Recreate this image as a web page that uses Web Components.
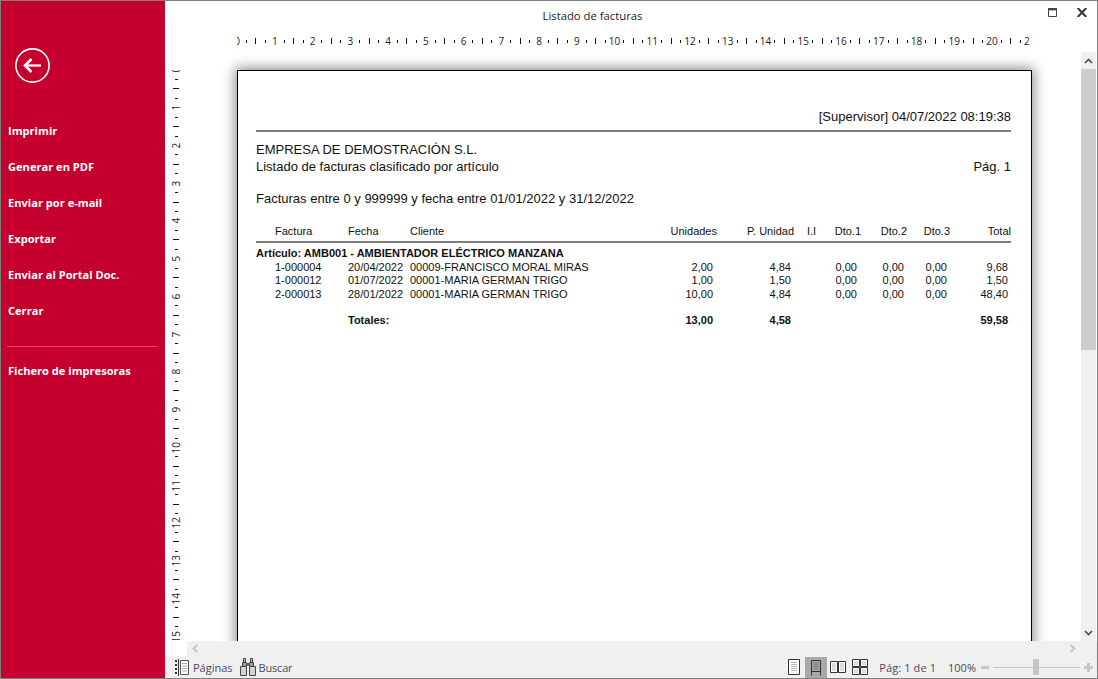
<!DOCTYPE html>
<html lang="es">
<head>
<meta charset="utf-8">
<title>Listado de facturas</title>
<style>
  html, body { margin: 0; padding: 0; background: #fff; overflow: hidden; }
  body { font-family: "Open Sans", "Liberation Sans", sans-serif; }
</style>
</head>
<body>

<app-window>
  <side-menu slot="menu">
    <menu-item>Imprimir</menu-item>
    <menu-item>Generar en PDF</menu-item>
    <menu-item>Enviar por e-mail</menu-item>
    <menu-item>Exportar</menu-item>
    <menu-item>Enviar al Portal Doc.</menu-item>
    <menu-item>Cerrar</menu-item>
    <menu-item slot="extra">Fichero de impresoras</menu-item>
  </side-menu>

  <title-bar slot="title">Listado de facturas</title-bar>
  <cm-ruler slot="hruler" count="22"></cm-ruler>
  <cm-ruler slot="vruler" vertical count="16"></cm-ruler>

  <report-page slot="page">
    <report-line align="right" top="38">[Supervisor] 04/07/2022 08:19:38</report-line>
    <report-rule top="5"></report-rule>
    <report-line top="10">EMPRESA DE DEMOSTRACIÓN S.L.</report-line>
    <report-line top="1" split>
      <span>Listado de facturas clasificado por artículo</span>
      <span>Pág. 1</span>
    </report-line>
    <report-line top="16">Facturas entre 0 y 999999 y fecha entre 01/01/2022 y 31/12/2022</report-line>

    <report-row top="18">
      <span class="c2">Factura</span><span class="c3">Fecha</span><span class="c4">Cliente</span>
      <span class="c5">Unidades</span><span class="c6">P. Unidad</span><span class="c7">I.I</span>
      <span class="c8">Dto.1</span><span class="c9">Dto.2</span><span class="c10">Dto.3</span><span class="c11">Total</span>
    </report-row>
    <report-rule top="3"></report-rule>

    <report-row top="4" bold><span class="all">Artículo: AMB001 - AMBIENTADOR ELÉCTRICO MANZANA</span></report-row>
    <report-row top="1" values>
      <span class="c2">1-000004</span><span class="c3">20/04/2022</span><span class="c4">00009-FRANCISCO MORAL MIRAS</span>
      <span class="c5">2,00</span><span class="c6">4,84</span>
      <span class="c8">0,00</span><span class="c9">0,00</span><span class="c10">0,00</span><span class="c11">9,68</span>
    </report-row>
    <report-row top="0" values>
      <span class="c2">1-000012</span><span class="c3">01/07/2022</span><span class="c4">00001-MARIA GERMAN TRIGO</span>
      <span class="c5">1,00</span><span class="c6">1,50</span>
      <span class="c8">0,00</span><span class="c9">0,00</span><span class="c10">0,00</span><span class="c11">1,50</span>
    </report-row>
    <report-row top="1" values>
      <span class="c2">2-000013</span><span class="c3">28/01/2022</span><span class="c4">00001-MARIA GERMAN TRIGO</span>
      <span class="c5">10,00</span><span class="c6">4,84</span>
      <span class="c8">0,00</span><span class="c9">0,00</span><span class="c10">0,00</span><span class="c11">48,40</span>
    </report-row>
    <report-row top="13" values bold>
      <span class="c3">Totales:</span>
      <span class="c5">13,00</span><span class="c6">4,58</span><span class="c11">59,58</span>
    </report-row>
  </report-page>

  <scroll-bar slot="vscroll" vertical></scroll-bar>
  <scroll-bar slot="hscroll"></scroll-bar>
  <status-bar slot="status"></status-bar>
</app-window>

<script>
class AppWindow extends HTMLElement {
  constructor() {
    super()
    this.attachShadow({ mode: 'open' }).innerHTML = `
      <style>
        :host {
          display: grid;
          grid-template-columns: 164px 1fr;
          width: 1098px;
          height: 679px;
          box-sizing: border-box;
          border: 1px solid #7f7f7f;
          background: #fff;
        }
        .main {
          display: grid;
          grid-template-columns: 22px 894px 1fr;
          grid-template-rows: 29px 22px 589px 15px 22px;
          min-width: 0;
          min-height: 0;
        }
        .title { grid-column: 1 / -1; }
        .hruler { grid-column: 1 / -1; padding-left: 72px; }
        .vruler { padding-top: 18px; min-height: 0; overflow: hidden; }
        .view { padding: 18px 0 0 50px; overflow: hidden; min-height: 0; }
        .hscroll { grid-column: 2 / -1; }
        .status { grid-column: 1 / -1; }
      </style>
      <slot name="menu"></slot>
      <div class="main">
        <div class="title"><slot name="title"></slot></div>
        <div class="hruler"><slot name="hruler"></slot></div>
        <div class="vruler"><slot name="vruler"></slot></div>
        <div class="view"><slot name="page"></slot></div>
        <slot name="vscroll"></slot>
        <div></div>
        <div class="hscroll"><slot name="hscroll"></slot></div>
        <div class="status"><slot name="status"></slot></div>
      </div>`
  }
}

class SideMenu extends HTMLElement {
  constructor() {
    super()
    this.attachShadow({ mode: 'open' }).innerHTML = `
      <style>
        :host {
          display: block;
          background: #c6002e;
          color: #fff;
          padding: 46px 8px 0 6px;
          box-sizing: border-box;
        }
        .back { display: block; margin-left: 7px; }
        .items { margin-top: 29px; margin-left: 1px; display: grid; grid-auto-rows: 36px; }
        hr { border: 0; height: 1px; background: #e5456c; margin: 18px 0 0 0; }
        .extra { display: grid; grid-auto-rows: 36px; margin: 5px 0 0 1px; }
      </style>
      <svg class="back" width="36" height="36" viewBox="0 0 36 36">
        <circle cx="18.5" cy="18.5" r="16.6" fill="none" stroke="#fff" stroke-width="1.6"/>
        <path d="M27 18.5H11.5" fill="none" stroke="#fff" stroke-width="2.2"/>
        <path d="M17.5 12L11 18.5L17.5 25" fill="none" stroke="#fff" stroke-width="2.6"/>
      </svg>
      <div class="items"><slot></slot></div>
      <hr>
      <div class="extra"><slot name="extra"></slot></div>`
  }
}

class MenuItem extends HTMLElement {
  constructor() {
    super()
    this.attachShadow({ mode: 'open' }).innerHTML = `
      <style>
        :host {
          display: flex;
          align-items: center;
          font: 700 11.1px "Open Sans", sans-serif;
          color: #fff;
          white-space: nowrap;
        }
      </style>
      <slot></slot>`
  }
}

class TitleBar extends HTMLElement {
  constructor() {
    super()
    this.attachShadow({ mode: 'open' }).innerHTML = `
      <style>
        :host {
          display: grid;
          grid-template-columns: 1fr auto;
          height: 29px;
          font: 11.3px "Open Sans", sans-serif;
          color: #222;
        }
        .text { grid-column: 1 / -1; grid-row: 1; display: flex; justify-content: center; align-items: center; padding: 0 77px 1px 0; }
        .buttons { grid-column: 2; grid-row: 1; display: flex; gap: 20px; padding: 7px 10px 0 0; align-items: flex-start; }
        svg { display: block; }
      </style>
      <div class="text"><slot></slot></div>
      <div class="buttons">
        <svg width="9" height="9" viewBox="0 0 9 9">
          <path d="M.5.5h8v8h-8z" fill="none" stroke="#444"/><path d="M0 0h9v2.4H0z" fill="#444"/>
        </svg>
        <svg width="10" height="9" viewBox="0 0 10 9">
          <path d="M.7 0L9.3 9M9.3 0L.7 9" fill="none" stroke="#333" stroke-width="2"/>
        </svg>
      </div>`
  }
}

class CmRuler extends HTMLElement {
  constructor() {
    super()
    const count = +this.getAttribute('count')
    let marks = ''
    for (let n = 0; n < count; n++) {
      marks += `<b>${n}</b><i></i><i class="long"></i><i></i>`
    }
    this.attachShadow({ mode: 'open' }).innerHTML = `
      <style>
        :host {
          display: block;
          overflow: hidden;
          width: 794px;
          height: 22px;
          font: 10px "Open Sans", sans-serif;
          color: #222;
        }
        :host([vertical]) { width: 22px; height: 570px; }
        .marks { display: flex; align-items: center; height: 22px; margin-left: -4.725px; }
        :host([vertical]) .marks {
          flex-direction: column;
          width: 22px;
          height: auto;
          margin: -4.725px 0 0 0;
        }
        b, i { flex: 0 0 9.45px; min-width: 0; min-height: 0; display: flex; align-items: center; justify-content: center; font-style: normal; font-weight: 400; line-height: 1; white-space: nowrap; }
        i::after { content: ""; flex: none; width: 1px; height: 3px; background: #111; }
        i.long::after { height: 6px; }
        :host([vertical]) i::after { width: 3px; height: 1px; }
        :host([vertical]) i.long::after { width: 6px; }
        :host([vertical]) b { writing-mode: vertical-rl; transform: rotate(180deg); }
        :host([vertical]) i, :host([vertical]) b { width: 22px; }
      </style>
      <div class="marks">${marks}</div>`
  }
}

class ReportPage extends HTMLElement {
  constructor() {
    super()
    this.attachShadow({ mode: 'open' }).innerHTML = `
      <style>
        :host {
          display: block;
          box-sizing: border-box;
          width: 795px;
          height: 640px;
          background: #fff;
          border: 1px solid #000;
          box-shadow: 0 0 12px 2px rgba(0,0,0,.45);
          padding: 0 20px 0 18px;
          font-family: "Liberation Sans", Arial, sans-serif;
          color: #111;
        }
      </style>
      <slot></slot>`
  }
}

class ReportLine extends HTMLElement {
  constructor() {
    super()
    this.attachShadow({ mode: 'open' }).innerHTML = `
      <style>
        :host {
          display: flex;
          justify-content: flex-start;
          height: 16px;
          line-height: 16px;
          font-size: 13px;
          white-space: nowrap;
        }
        :host([align="right"]) { justify-content: flex-end; }
        :host([split]) { justify-content: space-between; }
      </style>
      <slot></slot>`
    this.style.marginTop = (this.getAttribute('top') || 0) + 'px'
  }
}

class ReportRule extends HTMLElement {
  constructor() {
    super()
    this.attachShadow({ mode: 'open' }).innerHTML = `
      <style>:host { display: block; height: 2px; background: #7d7d7d; }</style>`
    this.style.marginTop = (this.getAttribute('top') || 0) + 'px'
  }
}

class ReportRow extends HTMLElement {
  constructor() {
    super()
    this.attachShadow({ mode: 'open' }).innerHTML = `
      <style>
        :host {
          display: grid;
          grid-template-columns: 19px 73px 62px 230px 77px 77px 26px 41px 46px 43px 61px;
          height: 13px;
          line-height: 13px;
          font-size: 11px;
          white-space: nowrap;
        }
        :host([bold]) { font-weight: 700; }
        ::slotted(.all) { grid-column: 1 / -1; }
        ::slotted(.c2) { grid-column: 2; }
        ::slotted(.c3) { grid-column: 3; }
        ::slotted(.c4) { grid-column: 4; }
        ::slotted(.c5) { grid-column: 5; text-align: right; }
        ::slotted(.c6) { grid-column: 6; text-align: right; }
        ::slotted(.c7) { grid-column: 7; padding-left: 13px; }
        ::slotted(.c8) { grid-column: 8; text-align: right; }
        ::slotted(.c9) { grid-column: 9; text-align: right; }
        ::slotted(.c10) { grid-column: 10; text-align: right; }
        ::slotted(.c11) { grid-column: 11; text-align: right; }
        :host([values]) ::slotted(.c5),
        :host([values]) ::slotted(.c8) { padding-right: 4px; }
        :host([values]) ::slotted(.c6),
        :host([values]) ::slotted(.c9),
        :host([values]) ::slotted(.c10),
        :host([values]) ::slotted(.c11) { padding-right: 3px; }
      </style>
      <slot></slot>`
    this.style.marginTop = (this.getAttribute('top') || 0) + 'px'
  }
}

class ScrollBar extends HTMLElement {
  constructor() {
    super()
    const vertical = this.hasAttribute('vertical')
    this.attachShadow({ mode: 'open' }).innerHTML = vertical ? `
      <style>
        :host { display: flex; flex-direction: column; align-items: center; width: 15px; background: #f0f0f0; height: 589px; }
        .btn { flex: 0 0 17px; display: flex; align-items: center; justify-content: center; }
        .thumb { flex: 0 0 281px; align-self: stretch; background: #cdcdcd; }
        .rest { flex: 1; }
      </style>
      <div class="btn"><svg width="9" height="6" viewBox="0 0 9 6"><path d="M1 5L4.5 1.5L8 5" fill="none" stroke="#505050" stroke-width="1.7"/></svg></div>
      <div class="thumb"></div>
      <div class="rest"></div>
      <div class="btn"><svg width="9" height="6" viewBox="0 0 9 6"><path d="M1 1L4.5 4.5L8 1" fill="none" stroke="#505050" stroke-width="1.7"/></svg></div>` : `
      <style>
        :host { display: flex; align-items: center; justify-content: space-between; height: 15px; background: #f0f0f0; padding: 0 21px 0 5px; }
        svg { display: block; }
      </style>
      <svg width="7" height="9" viewBox="0 0 7 9"><path d="M5.5 1L1.5 4.5L5.5 8" fill="none" stroke="#c4c4c4" stroke-width="1.8"/></svg>
      <svg width="7" height="9" viewBox="0 0 7 9"><path d="M1.5 1L5.5 4.5L1.5 8" fill="none" stroke="#c4c4c4" stroke-width="1.8"/></svg>`
  }
}

class StatusBar extends HTMLElement {
  constructor() {
    super()
    this.attachShadow({ mode: 'open' }).innerHTML = `
      <style>
        :host {
          display: flex;
          align-items: center;
          height: 22px;
          background: #f0f0f0;
          font: 11px "Open Sans", sans-serif;
          color: #4a4a58;
          padding-left: 10px;
          white-space: nowrap;
        }
        svg { display: block; flex: none; }
        .pages { margin-right: 4px; }
        .find { margin: 0 3px 0 7px; }
        .find + span { letter-spacing: -.2px; }
        .right { margin-left: auto; display: flex; align-items: center; height: 22px; }
        .view { width: 22px; height: 21px; display: flex; align-items: center; justify-content: center; }
        .view.on { background: #a9a9a9; align-self: flex-end; }
        .page-no { margin: 0 12px 0 8px; letter-spacing: .1px; }
        .zoom { margin-right: 5px; }
        .slider { display: flex; align-items: center; width: 87px; height: 16px; margin: 0 4px; position: relative; }
        .slider::before { content: ""; flex: 1; height: 1px; background: #c6c6c6; }
        .knob { position: absolute; left: 40px; top: 0; width: 6px; height: 16px; background: #c6c6c6; }
      </style>
      <svg class="pages" width="14" height="17" viewBox="0 0 14 17">
        <path d="M0 1h2v2H0zM0 5h2v2H0zM0 9h2v2H0zM0 13h2v2H0z" fill="#333"/>
        <path d="M3.5 0v17" stroke="#333"/>
        <path d="M5.5 1.5h8v14h-8z" fill="#fff" stroke="#555"/>
        <path d="M7 4.5h5M7 7h5M7 9.5h5M7 12h5" stroke="#aaa"/>
      </svg>
      <span>Páginas</span>
      <svg class="find" width="16" height="18" viewBox="0 0 16 18">
        <path d="M3.5 .5h2v4h-2zM10.5 .5h2v4h-2z" fill="#bbb" stroke="#444"/>
        <path d="M2.5 4.5h4v4h-4zM9.5 4.5h4v4h-4z" fill="#999" stroke="#444"/>
        <path d="M.5 8.5h6v9h-6zM9.5 8.5h6v9h-6z" fill="#d4d4d4" stroke="#444"/>
        <path d="M6.5 5h3v3h-3z" fill="#666"/>
      </svg>
      <span>Buscar</span>
      <div class="right">
        <div class="view">
          <svg width="12" height="16" viewBox="0 0 12 16">
            <path d="M.5.5h11v15H.5z" fill="#fff" stroke="#333"/>
            <path d="M3 3.5h6M3 5.5h6M3 7.5h6M3 9.5h6M3 11.5h6" stroke="#bbb"/>
          </svg>
        </div>
        <div class="view on">
          <svg width="10" height="16" viewBox="0 0 10 16">
            <path d="M.5.5h9v15" fill="none" stroke="#333"/>
            <path d="M.5.5v15" fill="none" stroke="#333"/>
            <path d="M1 11.5h8" stroke="#333"/>
            <path d="M2 3h6M2 5h6M2 7h6M2 9h6" stroke="#777"/>
          </svg>
        </div>
        <div class="view">
          <svg width="16" height="12" viewBox="0 0 16 12">
            <path d="M.5.5h7v11h-7zM8.5.5h7v11h-7z" fill="#fff" stroke="#333"/>
            <path d="M2 3h4M2 5h4M2 7h4M2 9h4M10 3h4M10 5h4M10 7h4M10 9h4" stroke="#bbb"/>
          </svg>
        </div>
        <div class="view">
          <svg width="16" height="16" viewBox="0 0 16 16">
            <path d="M.5.5h7v7h-7zM8.5.5h7v7h-7zM.5 8.5h7v7h-7zM8.5 8.5h7v7h-7z" fill="#fff" stroke="#333"/>
            <path d="M2 3h4M2 5h4M10 3h4M10 5h4M2 11h4M2 13h4M10 11h4M10 13h4" stroke="#bbb"/>
          </svg>
        </div>
        <span class="page-no">Pág: 1 de 1</span>
        <span class="zoom">100%</span>
        <svg width="8" height="3" viewBox="0 0 8 3"><path d="M0 0h8v3H0z" fill="#c6c6c6"/></svg>
        <div class="slider"><div class="knob"></div></div>
        <svg width="9" height="9" viewBox="0 0 9 9" style="margin-right:4px"><path d="M3 0h3v3h3v3H6v3H3V6H0V3h3z" fill="#c6c6c6"/></svg>
      </div>`
  }
}

customElements.define('app-window', AppWindow)
customElements.define('side-menu', SideMenu)
customElements.define('menu-item', MenuItem)
customElements.define('title-bar', TitleBar)
customElements.define('cm-ruler', CmRuler)
customElements.define('report-page', ReportPage)
customElements.define('report-line', ReportLine)
customElements.define('report-rule', ReportRule)
customElements.define('report-row', ReportRow)
customElements.define('scroll-bar', ScrollBar)
customElements.define('status-bar', StatusBar)
</script>
</body>
</html>
